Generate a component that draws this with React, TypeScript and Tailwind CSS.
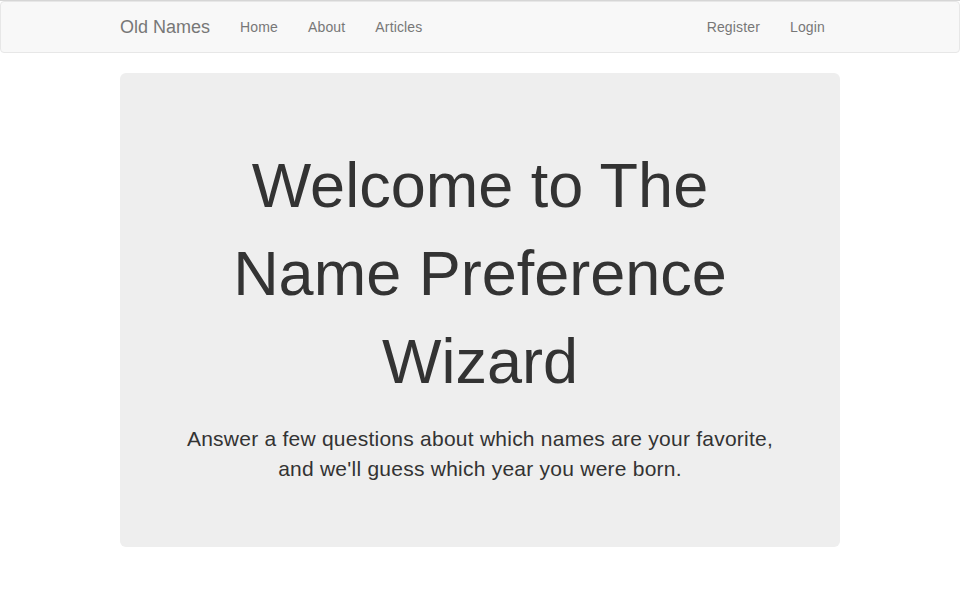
import React from 'react';

const navLeft = ['Home', 'About', 'Articles'];
const navRight = ['Register', 'Login'];

const App: React.FC = () => {
  return (
    <div className="min-h-[600px] bg-white text-[14px] text-[#333] font-['Liberation_Sans',Arial,sans-serif]">
      <div className="h-px bg-[#d6d6d6]" />

      {/* Navbar */}
      <nav className="h-[52px] border border-[#e7e7e7] rounded-[4px] bg-[#f8f8f8] mb-[20px]">
        <div className="w-[750px] mx-auto px-[15px] flex items-center h-[50px]">
          <a className="h-[50px] flex items-center pr-[15px] text-[18px] leading-[20px] text-[#777]">Old Names</a>
          <ul className="flex">
            {navLeft.map((item) => (
              <li key={item}>
                <a className="h-[50px] flex items-center px-[15px] leading-[20px] tracking-[0.15px] text-[#777]">{item}</a>
              </li>
            ))}
          </ul>
          <ul className="flex ml-auto">
            {navRight.map((item) => (
              <li key={item}>
                <a className="h-[50px] flex items-center px-[15px] leading-[20px] tracking-[0.15px] text-[#777]">{item}</a>
              </li>
            ))}
          </ul>
        </div>
      </nav>

      {/* Jumbotron */}
      <div className="w-[750px] mx-auto px-[15px]">
        <div className="bg-[#eee] rounded-[6px] px-[60px] py-[48px] text-center">
          <h1 className="mt-[20px] mb-[19px] text-[63px] leading-[88px] font-normal text-[#333]">
            Welcome to The
            <br />
            Name Preference
            <br />
            Wizard
          </h1>
          <p className="mb-[15px] text-[21px] leading-[30px] tracking-[0.24px] text-[#333]">
            Answer a few questions about which names are your favorite,
            <br />
            and we'll guess which year you were born.
          </p>
        </div>
      </div>
    </div>
  );
};

export default App;
